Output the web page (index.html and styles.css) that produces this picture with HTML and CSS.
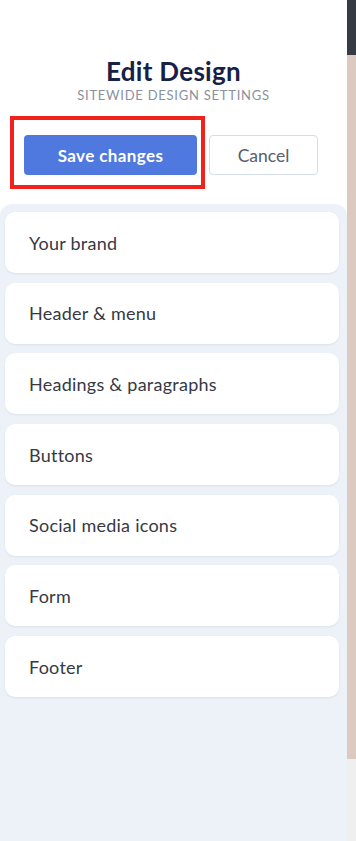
FILE: index.html
```html
<!DOCTYPE html>
<html lang="en">
<head>
    <meta charset="UTF-8">
    <meta name="viewport" content="width=device-width, initial-scale=1.0">
    <title>Edit Design</title>
    <link rel="stylesheet" href="styles.css">
</head>
<body>
    <div class="page">
        <div class="panel">
            <div class="panel-head">
                <h1>Edit Design</h1>
                <p class="subtitle">Sitewide design settings</p>
            </div>
            <div class="actions">
                <div class="highlight">
                    <button class="btn-save">Save changes</button>
                </div>
                <button class="btn-cancel">Cancel</button>
            </div>
            <ul class="sections">
                <li>Your brand</li>
                <li>Header &amp; menu</li>
                <li>Headings &amp; paragraphs</li>
                <li>Buttons</li>
                <li>Social media icons</li>
                <li>Form</li>
                <li>Footer</li>
            </ul>
        </div>
        <div class="backdrop">
            <div class="bar-top"></div>
            <div class="bar-mid"></div>
            <div class="bar-bottom"></div>
        </div>
    </div>
</body>
</html>
```

FILE: styles.css
```css
body {
    margin: 0;
    font-family: Lato, "Open Sans", sans-serif;
    background-color: #ffffff;
}

.page {
    display: flex;
    height: 841px;
}

.panel {
    width: 347px;
    display: flex;
    flex-direction: column;
    background-color: #ffffff;
}

.panel-head {
    padding-top: 56px;
    text-align: center;
}

.panel-head h1 {
    margin: 0;
    font-size: 26px;
    font-weight: 700;
    line-height: 31px;
    letter-spacing: 0.3px;
    color: #172046;
}

.subtitle {
    margin: 0;
    font-size: 13px;
    line-height: 16px;
    letter-spacing: 0.75px;
    text-transform: uppercase;
    color: #8891a0;
}

.actions {
    display: flex;
    align-items: flex-start;
    margin-top: 13px;
    padding-left: 10px;
}

.highlight {
    border: 4px solid #f1221c;
    padding: 15px 4px 10px 10px;
}

.btn-save {
    display: block;
    width: 173px;
    height: 40px;
    border: none;
    border-radius: 4px;
    background-color: #5079df;
    color: #ffffff;
    font-family: Lato, sans-serif;
    font-size: 17px;
    font-weight: 700;
    letter-spacing: 0.4px;
    cursor: pointer;
}

.btn-cancel {
    width: 109px;
    height: 40px;
    margin-left: 4px;
    margin-top: 19px;
    border: 1px solid #d3dee8;
    border-radius: 4px;
    background-color: #ffffff;
    color: #556070;
    font-family: Lato, sans-serif;
    font-size: 17.5px;
    cursor: pointer;
}

.sections {
    flex: 1;
    list-style: none;
    margin: 15px 0 0;
    padding: 8px 8px 0 5px;
    background-color: #edf2f9;
    border-radius: 12px 12px 0 0;
    display: flex;
    flex-direction: column;
    gap: 9.7px;
}

.sections li {
    height: 61px;
    flex-shrink: 0;
    display: flex;
    align-items: center;
    padding-left: 24px;
    background-color: #ffffff;
    border-radius: 10px;
    box-shadow: 0 1px 2px rgba(160, 180, 205, 0.25);
    font-size: 18px;
    letter-spacing: 0.25px;
    color: #363944;
}

.backdrop {
    width: 9px;
    display: flex;
    flex-direction: column;
    box-shadow: inset 2px 0 2px rgba(0, 0, 0, 0.25);
}

.bar-top {
    height: 55px;
    background-color: #363a42;
}

.bar-mid {
    flex: 1;
    background-color: #dccac1;
}

.bar-bottom {
    height: 82px;
    background-color: #efefef;
}
```
